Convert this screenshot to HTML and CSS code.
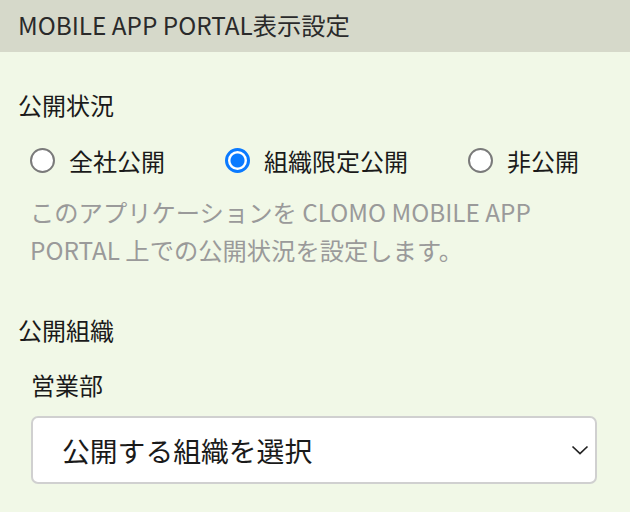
FILE: index.html
```html
<!DOCTYPE html>
<html lang="ja">
<head>
<meta charset="utf-8">
<link rel="stylesheet" href="styles.css">
</head>
<body>
<header class="title">MOBILE APP PORTAL表示設定</header>
<section class="content">
  <div class="label">公開状況</div>
  <div class="radios">
    <label class="radio"><input type="radio" name="pub"><span>全社公開</span></label>
    <label class="radio"><input type="radio" name="pub" checked><span>組織限定公開</span></label>
    <label class="radio"><input type="radio" name="pub"><span>非公開</span></label>
  </div>
  <p class="help">このアプリケーションを CLOMO MOBILE APP PORTAL 上での公開状況を設定します。</p>
  <div class="label label-org">公開組織</div>
  <div class="sub">営業部</div>
  <div class="select">
    <span class="select-text">公開する組織を選択</span>
    <svg class="chevron" width="18" height="10" viewBox="0 0 18 10"><path d="M1.5 1.5 L9 8.5 L16.5 1.5" fill="none" stroke="#222" stroke-width="1.7"/></svg>
  </div>
</section>
</body>
</html>
```
FILE: styles.css
```css
* { box-sizing: border-box; }
html, body { margin: 0; padding: 0; }
body {
  background: #f1f8e7;
  font-family: "Noto Sans CJK JP", "Noto Sans", sans-serif;
  color: #1a1a1a;
  width: 630px;
  height: 512px;
  overflow: hidden;
}
.title {
  height: 52px;
  background: #d6d9ca;
  color: #2a2a2a;
  font-size: 24.3px;
  line-height: 50px;
  padding-left: 18px;
}
.content {
  padding: 37px 18px 0 18px;
}
.label {
  font-size: 24px;
  line-height: 32px;
}
.radios {
  display: flex;
  gap: 60px;
  margin-top: 19px;
  padding-left: 12px;
  height: 40px;
  align-items: center;
}
.radio {
  display: flex;
  align-items: center;
  gap: 14px;
  font-size: 24px;
}
.radio input {
  appearance: none;
  -webkit-appearance: none;
  margin: 0;
  width: 25px;
  height: 25px;
  border-radius: 50%;
  border: 2px solid #7a7a7a;
  background: #fff;
}
.radio input:checked {
  border: 3px solid #0a7aff;
  background: radial-gradient(circle, #0a7aff 0 6.5px, #fff 7.5px);
}
.help {
  margin: 13px 0 0 0;
  padding-left: 12px;
  width: 545px;
  font-size: 24.3px;
  line-height: 38px;
  color: #9a9a9a;
}
.label-org {
  margin-top: 45px;
}
.sub {
  margin-top: 23px;
  padding-left: 13px;
  font-size: 24px;
  line-height: 32px;
}
.select {
  margin: 15px 0 0 13px;
  width: 566px;
  height: 68px;
  background: #fff;
  border: 2px solid #d0d0d0;
  border-radius: 7px;
  display: flex;
  align-items: center;
  justify-content: space-between;
  padding: 0 6px 0 29px;
}
.select-text {
  font-size: 27.8px;
}
.chevron { display: block; }
```
